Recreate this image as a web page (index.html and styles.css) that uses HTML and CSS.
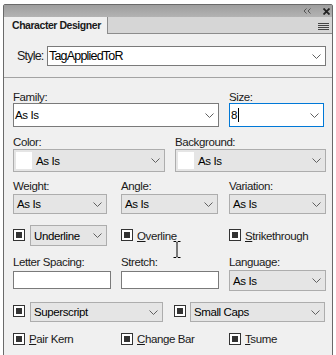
FILE: index.html
```html
<!DOCTYPE html>
<html>
<head>
<meta charset="utf-8">
<link rel="stylesheet" href="styles.css">
</head>
<body>
<div class="window">
  <div class="titlebar">
    <svg class="collapse" width="8" height="6" viewBox="0 0 8 6"><polyline points="3.5,0.5 1,3 3.5,5.5" fill="none" stroke="#555" stroke-width="1"/><polyline points="7.5,0.5 5,3 7.5,5.5" fill="none" stroke="#555" stroke-width="1"/></svg>
    <svg class="close" width="7" height="7" viewBox="0 0 7 7"><path d="M0.5 0.5 L6.5 6.5 M6.5 0.5 L0.5 6.5" stroke="#222" stroke-width="1.8"/></svg>
  </div>
  <div class="tabbar">
    <div class="tab">Character Designer</div>
    <div class="tabfill">
      <svg class="menu" width="11" height="8" viewBox="0 0 11 8"><path d="M0 0.5H11M0 2.5H11M0 4.5H11M0 6.5H11" stroke="#444" stroke-width="1"/></svg>
    </div>
  </div>
  <div class="content">
    <div class="style-row">
      <span class="style-label">Style:</span>
      <div class="combo edit style-combo"><span class="val">TagAppliedToR</span><svg class="chev" width="9" height="5" viewBox="0 0 9 5"><polyline points="0.5,0.5 4.5,4.5 8.5,0.5" fill="none" stroke="#606060"/></svg></div>
    </div>
    <div class="sep"></div>
    <div class="fields">
      <div class="row row-family">
        <div class="cell c-family">
          <div class="lbl">Family:</div>
          <div class="combo edit family-combo"><span class="val">As Is</span><svg class="chev" width="9" height="5" viewBox="0 0 9 5"><polyline points="0.5,0.5 4.5,4.5 8.5,0.5" fill="none" stroke="#606060"/></svg></div>
        </div>
        <div class="cell">
          <div class="lbl">Size:</div>
          <div class="combo edit focus size-combo"><span class="val">8</span><span class="caret"></span><svg class="chev" width="9" height="5" viewBox="0 0 9 5"><polyline points="0.5,0.5 4.5,4.5 8.5,0.5" fill="none" stroke="#606060"/></svg></div>
        </div>
      </div>
      <div class="row row-color">
        <div class="cell c-color">
          <div class="lbl">Color:</div>
          <div class="combo color-combo"><span class="swatch"></span><span class="val">As Is</span><svg class="chev" width="9" height="5" viewBox="0 0 9 5"><polyline points="0.5,0.5 4.5,4.5 8.5,0.5" fill="none" stroke="#606060"/></svg></div>
        </div>
        <div class="cell">
          <div class="lbl">Background:</div>
          <div class="combo color-combo bg-combo"><span class="swatch"></span><span class="val">As Is</span><svg class="chev" width="9" height="5" viewBox="0 0 9 5"><polyline points="0.5,0.5 4.5,4.5 8.5,0.5" fill="none" stroke="#606060"/></svg></div>
        </div>
      </div>
      <div class="row grid3 row-weight">
        <div class="cell">
          <div class="lbl">Weight:</div>
          <div class="combo small w94"><span class="val">As Is</span><svg class="chev" width="9" height="5" viewBox="0 0 9 5"><polyline points="0.5,0.5 4.5,4.5 8.5,0.5" fill="none" stroke="#606060"/></svg></div>
        </div>
        <div class="cell">
          <div class="lbl">Angle:</div>
          <div class="combo small w97"><span class="val">As Is</span><svg class="chev" width="9" height="5" viewBox="0 0 9 5"><polyline points="0.5,0.5 4.5,4.5 8.5,0.5" fill="none" stroke="#606060"/></svg></div>
        </div>
        <div class="cell">
          <div class="lbl">Variation:</div>
          <div class="combo small w97"><span class="val">As Is</span><svg class="chev" width="9" height="5" viewBox="0 0 9 5"><polyline points="0.5,0.5 4.5,4.5 8.5,0.5" fill="none" stroke="#606060"/></svg></div>
        </div>
      </div>
      <div class="row grid3 row-checks">
        <div class="cell inline">
          <span class="cb"></span>
          <div class="combo under-combo"><span class="val">Underline</span><svg class="chev" width="9" height="5" viewBox="0 0 9 5"><polyline points="0.5,0.5 4.5,4.5 8.5,0.5" fill="none" stroke="#606060"/></svg></div>
        </div>
        <div class="cell inline"><span class="cb"></span><span class="cbtext"><u>O</u>verline</span></div>
        <div class="cell inline"><span class="cb"></span><span class="cbtext"><u>S</u>trikethrough</span></div>
      </div>
      <div class="row grid3 row-letter">
        <div class="cell">
          <div class="lbl">Letter Spacing:</div>
          <div class="textbox"></div>
        </div>
        <div class="cell">
          <div class="lbl">Stretch:</div>
          <div class="textbox"></div>
        </div>
        <div class="cell">
          <div class="lbl">Language:</div>
          <div class="combo lang-combo"><span class="val">As Is</span><svg class="chev" width="9" height="5" viewBox="0 0 9 5"><polyline points="0.5,0.5 4.5,4.5 8.5,0.5" fill="none" stroke="#606060"/></svg></div>
        </div>
      </div>
      <div class="row row-super">
        <div class="cell inline c-super">
          <span class="cb"></span>
          <div class="combo super-combo"><span class="val">Superscript</span><svg class="chev" width="9" height="5" viewBox="0 0 9 5"><polyline points="0.5,0.5 4.5,4.5 8.5,0.5" fill="none" stroke="#606060"/></svg></div>
        </div>
        <div class="cell inline">
          <span class="cb"></span>
          <div class="combo caps-combo"><span class="val">Small Caps</span><svg class="chev" width="9" height="5" viewBox="0 0 9 5"><polyline points="0.5,0.5 4.5,4.5 8.5,0.5" fill="none" stroke="#606060"/></svg></div>
        </div>
      </div>
      <div class="row grid3 row-pair">
        <div class="cell inline"><span class="cb"></span><span class="cbtext"><u>P</u>air Kern</span></div>
        <div class="cell inline"><span class="cb"></span><span class="cbtext"><u>C</u>hange Bar</span></div>
        <div class="cell inline"><span class="cb"></span><span class="cbtext"><u>T</u>sume</span></div>
      </div>
    </div>
  </div>
</div>
<svg class="ibeam" width="8" height="17" viewBox="0 0 8 17"><path d="M0.5 0.5 H3 L4 1.5 L5 0.5 H7.5 M4 1.5 V15.5 M0.5 16.5 H3 L4 15.5 L5 16.5 H7.5" fill="none" stroke="#000" stroke-width="1"/></svg>
</body>
</html>
```

FILE: styles.css
```css
* { box-sizing: border-box; }
html, body { margin: 0; padding: 0; }
body {
  background: #fff;
  font-family: "Liberation Sans", Arial, sans-serif;
  font-size: 11.5px;
  letter-spacing: -0.4px;
  color: #000;
  overflow: hidden;
  height: 355px;
  position: relative;
}
.window {
  margin: 4px 0 0 3px;
  width: 330px;
  height: 360px;
  border: 1px solid #6a6a6a;
  border-radius: 2px 2px 0 0;
  background: #f0f0f0;
  display: flex;
  flex-direction: column;
}
.titlebar {
  height: 12px;
  flex: none;
  background: linear-gradient(#9e9e9e, #b3b3b3);
  display: flex;
  align-items: center;
  justify-content: flex-end;
}
.collapse { margin-right: 12px; }
.close { margin-right: 2px; }
.tabbar {
  height: 17px;
  flex: none;
  display: flex;
}
.tab {
  width: 104px;
  background: #f0f0f0;
  border-right: 1px solid #8c8c8c;
  padding-left: 8px;
  font-weight: bold;
  font-size: 10.5px;
  letter-spacing: -0.45px;
  line-height: 16px;
  white-space: nowrap;
  color: #1a1a1a;
}
.tabfill {
  flex: 1;
  background: #d6d6d6;
  border-bottom: 1px solid #8c8c8c;
  display: flex;
  justify-content: flex-end;
  align-items: flex-start;
}
.menu { margin: 6px 3px 0 0; }
.content { flex: 1; }
.style-row {
  margin-top: 12px;
  padding-left: 13px;
  display: flex;
  align-items: center;
  font-size: 12.5px;
  letter-spacing: -0.8px;
}
.style-label { width: 30px; color: #1a1a1a; }
.combo {
  display: flex;
  align-items: center;
  background: #e5e5e5;
  border: 1px solid #adadad;
  padding-left: 3px;
  white-space: nowrap;
}
.combo .chev { margin-left: auto; margin-right: 4px; flex: none; }
.combo.edit { background: #fff; border-color: #7a7a7a; padding-left: 1px; }
.combo.focus { border-color: #0078d7; }
.style-combo { width: 279px; height: 20px; }
.sep { margin-top: 11px; height: 1px; background: #a3a3a3; }
.fields { padding: 13px 0 0 9px; }
.row { display: flex; }
.grid3 { display: grid; grid-template-columns: 108px 108px 97px; }
.lbl { height: 12px; line-height: 12px; color: #1a1a1a; white-space: nowrap; }
.c-family { width: 216px; }
.family-combo { width: 206px; height: 24px; }
.size-combo { width: 95px; height: 24px; padding-left: 2px; }
.caret { width: 1px; height: 14px; background: #000; margin-left: 1px; }
.row-color { margin-top: 9px; }
.c-color { width: 162px; }
.color-combo { width: 152px; height: 23px; margin-top: 1px; padding-left: 2px; }
.bg-combo { width: 151px; }
.swatch { width: 16px; height: 17px; background: #fff; margin-right: 4px; }
.row-weight { margin-top: 8px; }
.small { height: 20px; margin-top: 2px; }
.w94 { width: 94px; }
.w97 { width: 97px; }
.row-checks { margin-top: 11px; height: 21px; }
.inline { display: flex; align-items: center; white-space: nowrap; }
.cb {
  flex: none;
  width: 12px;
  height: 12px;
  border: 1px solid #333;
  background: #fff;
  padding: 2px;
  margin-top: -2px;
}
.cb::after {
  content: "";
  display: block;
  width: 6px;
  height: 6px;
  background: #333;
}
.cbtext { margin-left: 4px; color: #1a1a1a; }
.under-combo { width: 77px; height: 21px; margin-left: 5px; }
.row-letter { margin-top: 10px; }
.textbox { width: 98px; height: 18px; margin-top: 3px; background: #fff; border: 1px solid #7a7a7a; }
.lang-combo { width: 97px; height: 21px; margin-top: 2px; }
.row-super { margin-top: 11px; height: 20px; }
.c-super { width: 161px; }
.super-combo { width: 133px; height: 20px; margin-left: 5px; }
.caps-combo { width: 135px; height: 20px; margin-left: 4px; }
.row-pair { margin-top: 10px; height: 14px; }
.row-pair .cb { margin-top: 0; }
.ibeam { position: absolute; left: 173px; top: 241px; }
```
